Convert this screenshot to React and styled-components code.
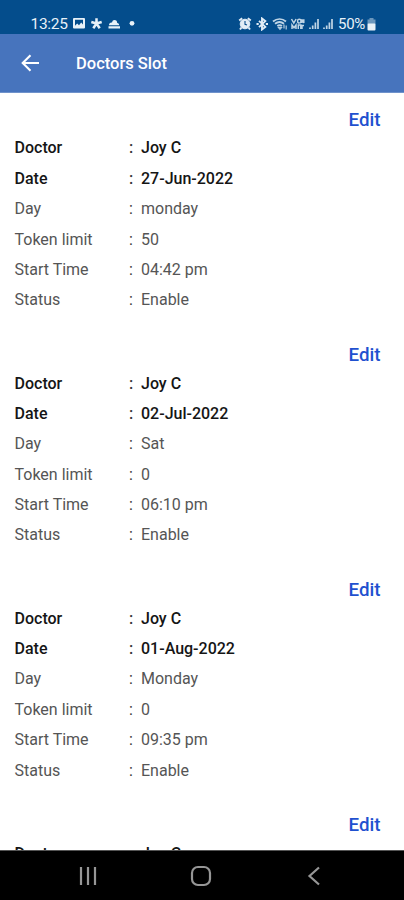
import React from "react";
import styled, {createGlobalStyle} from "styled-components";

const slots = [
  {id: 1, doctor: "Joy C", date: "27-Jun-2022", day: "monday", limit: "50", time: "04:42 pm", status: "Enable"},
  {id: 2, doctor: "Joy C", date: "02-Jul-2022", day: "Sat", limit: "0", time: "06:10 pm", status: "Enable"},
  {id: 3, doctor: "Joy C", date: "01-Aug-2022", day: "Monday", limit: "0", time: "09:35 pm", status: "Enable"},
  {id: 4, doctor: "Joy C"},
];

const fields = [
  {key: "doctor", label: "Doctor", strong: true},
  {key: "date", label: "Date", strong: true},
  {key: "day", label: "Day"},
  {key: "limit", label: "Token limit"},
  {key: "time", label: "Start Time"},
  {key: "status", label: "Status"},
];

const LeftIcons = () => (
  <svg width="68" height="14" viewBox="0 0 68 14" fill="#e8f1f8">
    <path fillRule="evenodd" d="M2 1h10a1 1 0 0 1 1 1v8.500a1 1 0 0 1-1 1H2a1 1 0 0 1-1-1V2a1 1 0 0 1 1-1zM3 2.800v6l2.200-2.200 1.800 1.600 2.200-2.600 1.800 2V2.800z" />
    <path d="M24.500 6.500V1.200M24.500 6.500l5.200-1.500M24.500 6.500l3.200 4.800M24.500 6.500l-3.200 4.800M24.500 6.500l-5.200-1.500" stroke="#e8f1f8" strokeWidth="2.500" />
    <path d="M36.500 9.300h11.500v2.200h-11.500zM37 8.300c0-2 1.400-3 3-2.700.4-1.800 1.200-2.600 2.500-2.600 1.700 0 2.700 1.200 2.700 2.900 1.300 0 2 1 2 2.400z" />
    <circle cx="60" cy="6.300" r="2.400" />
  </svg>
);

const RightIcons = () => (
  <svg width="97" height="14" viewBox="0 0 97 14" fill="none" stroke="#e2edf6">
    <circle cx="7" cy="7" r="4.800" fill="#e2edf6" />
    <path d="M1.200 3.500l3-2.200M12.800 3.500l-3-2.200M3.500 10.500L2 12.500M10.500 10.500l1.500 2" strokeWidth="2" />
    <path d="M7 4v3.300l2 .8" stroke="#064b8a" strokeWidth="1.100" />
    <path d="M21 3.900l6.300 6-3.300 2.600v-11l3.300 2.600-6.300 6" strokeWidth="1.900" />
    <path d="M18.500 7h2.200M27.800 7h2.200" strokeWidth="2" />
    <path d="M35 4.500c4-3.200 9.200-3.200 13 0M37 6.800c2.800-2.200 6.200-2.200 9 0M39.300 9c1.500-1 3.200-1 4.700 0" strokeWidth="1.900" opacity=".85" />
    <path d="M40.500 10.500h3l-1.500 1.800zM46 7.500v4M48.200 8.500v4" strokeWidth="1.200" opacity=".8" />
    <path d="M53.500 2l2.300 4 2.300-4M61 6.300c-2-.7-2-4 .3-4s2.300 3.500 0 4M63.800 6V2.300l2 3.700V2.300M54 12V8l2 2.800L58 8v4M60.300 12V8h2.500v4M64 12V8.500h2" strokeWidth="1.500" opacity=".85" />
    <path d="M72 10.500v1.500M74.700 8.500v3.500M77.400 5.500v6.500M80 2v10M86 10.500v1.500M88.700 8.500v3.500M91.400 5.500v6.500M94 2v10" strokeWidth="1.700" opacity=".85" />
  </svg>
);

export default function App() {
  return <Screen>
    <GlobalStyle />
    <StatusBar>
      <Clock>13:25</Clock>
      <LeftIcons />
      <Spacer />
      <RightIcons />
      <Battery>50%</Battery>
      <svg width="9" height="13" viewBox="0 0 9 13" fill="#e8f1f8">
        <path d="M2.500 0h4v1.500h2v4.500h-8v-4.500h2z" opacity=".45" />
        <rect x=".5" y="5.500" width="8" height="7" rx="1" />
      </svg>
    </StatusBar>

    <AppBar>
      <svg width="20" height="20" viewBox="0 0 20 20" fill="none" stroke="#fff" strokeWidth="2.100">
        <path d="M19 10H3M10.500 2.200L2.700 10l7.800 7.800" />
      </svg>
      <Title>Doctors Slot</Title>
    </AppBar>

    <List>
      {slots.map((slot) => <Slot key={slot.id}>
        <Edit>Edit</Edit>
        {fields.filter(({key}) => slot[key]).map(({key, label, strong}) =>
          <Row key={key} $strong={strong}>
            <Label>{label}</Label>
            <Colon>:</Colon>
            <span>{slot[key]}</span>
          </Row>
        )}
      </Slot>)}
    </List>

    <NavBar>
      <svg width="20" height="20" viewBox="0 0 20 20" stroke="#969696" strokeWidth="2.200">
        <path d="M3 1v18M10 1v18M17 1v18" />
      </svg>
      <svg width="22" height="22" viewBox="0 0 22 22" fill="none" stroke="#969696" strokeWidth="2.200">
        <rect x="2" y="2" width="18" height="18" rx="6" />
      </svg>
      <svg width="20" height="20" viewBox="0 0 20 20" fill="none" stroke="#969696" strokeWidth="2.200">
        <path d="M15 1.500L5.500 10l9.500 8.500" />
      </svg>
    </NavBar>
  </Screen>
}

const GlobalStyle = createGlobalStyle`
  body {
    margin: 0;
    background: #fff;
  }

  svg {
    display: block;
    flex-shrink: 0;
  }
`;

const Screen = styled.div`
  display: flex;
  flex-direction: column;
  height: 900px;
  overflow: hidden;
  font-family: Roboto, sans-serif;
`;

const StatusBar = styled.div`
  display: flex;
  align-items: center;
  flex-shrink: 0;
  height: 34px;
  padding: 14px 28px 0 30.500px;
  box-sizing: border-box;
  background: #044d8c;
`;

const Clock = styled.div`
  width: 41px;
  font-size: 15.500px;
  letter-spacing: -0.300px;
  color: #e8f1f8;
`;

const Spacer = styled.div`
  flex: 1;
`;

const Battery = styled.div`
  width: 29px;
  margin-left: 3px;
  font-size: 15px;
  letter-spacing: -0.300px;
  color: #e8f1f8;
`;

const AppBar = styled.div`
  display: flex;
  align-items: center;
  flex-shrink: 0;
  height: 59px;
  padding-left: 20px;
  box-sizing: border-box;
  background: #4774bd;
  border-bottom: 1px solid #6f92cb;
`;

const Title = styled.div`
  margin-left: 36px;
  font-size: 16.500px;
  font-weight: 500;
  color: #fff;
`;

const List = styled.div`
  flex: 1;
  min-height: 0;
  padding-top: 14.800px;
  overflow: hidden;
`;

const Slot = styled.div`
  padding: 0 23.500px 27.200px 14.500px;
`;

const Edit = styled.div`
  height: 25.600px;
  line-height: 25.600px;
  text-align: right;
  font-size: 18.700px;
  font-weight: 500;
  color: #1f51cf;
`;

const Row = styled.div`
  display: flex;
  height: 30.400px;
  line-height: 30.400px;
  font-size: 16px;
  font-weight: ${props => props.$strong ? 500 : 400};
  color: ${props => props.$strong ? "#151515" : "#555"};
`;

const Label = styled.div`
  width: 114.500px;
`;

const Colon = styled.div`
  width: 12px;
  color: #333;
`;

const NavBar = styled.div`
  display: flex;
  align-items: center;
  justify-content: space-between;
  flex-shrink: 0;
  height: 50px;
  padding: 0 80px 0 78px;
  box-sizing: border-box;
  background: #000;
  border-top: 1px solid #555;
`;
